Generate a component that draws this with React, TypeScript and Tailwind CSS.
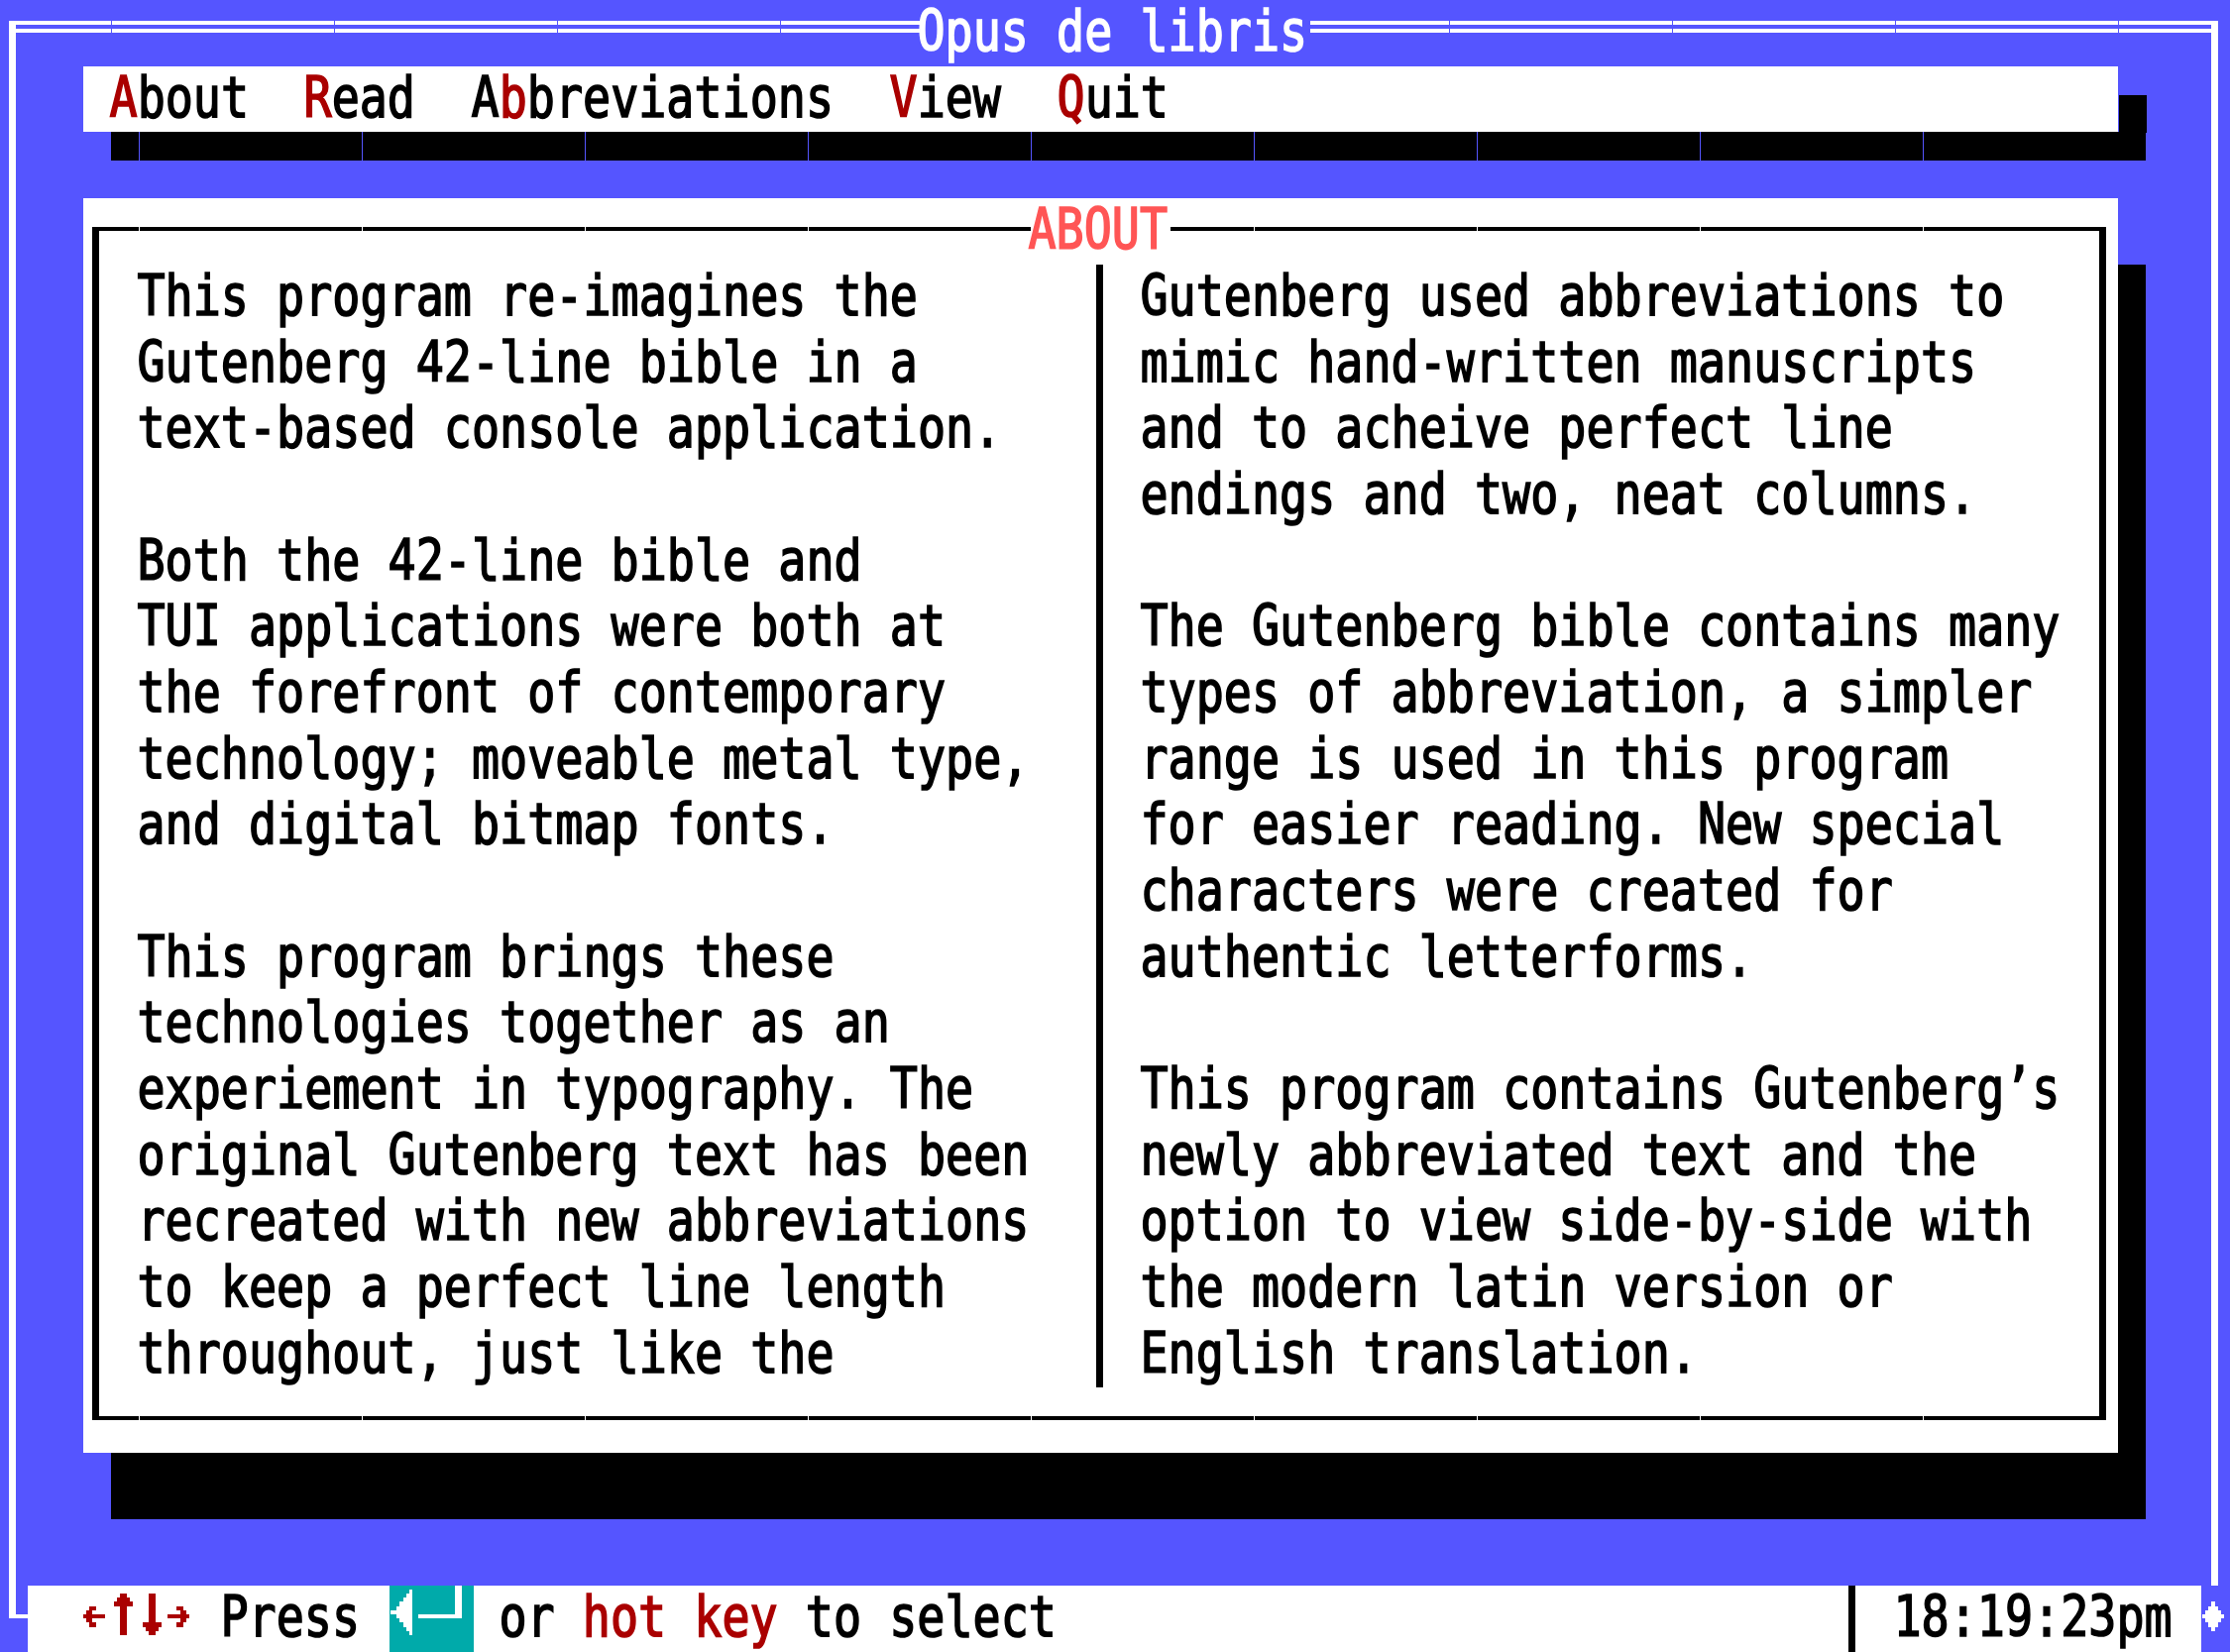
const ABOUT_LEFT = [
  'This program re-imagines the',
  'Gutenberg 42-line bible in a',
  'text-based console application.',
  '',
  'Both the 42-line bible and',
  'TUI applications were both at',
  'the forefront of contemporary',
  'technology; moveable metal type,',
  'and digital bitmap fonts.',
  '',
  'This program brings these',
  'technologies together as an',
  'experiement in typography. The',
  'original Gutenberg text has been',
  'recreated with new abbreviations',
  'to keep a perfect line length',
  'throughout, just like the',
];

const ABOUT_RIGHT = [
  'Gutenberg used abbreviations to',
  'mimic hand-written manuscripts',
  'and to acheive perfect line',
  'endings and two, neat columns.',
  '',
  'The Gutenberg bible contains many',
  'types of abbreviation, a simpler',
  'range is used in this program',
  'for easier reading. New special',
  'characters were created for',
  'authentic letterforms.',
  '',
  'This program contains Gutenberg\u2019s',
  'newly abbreviated text and the',
  'option to view side-by-side with',
  'the modern latin version or',
  'English translation.',
];

const TYPE =
  "block h-[66.68px] origin-left -translate-x-[2.5px] scale-x-[0.811] whitespace-pre font-['DejaVu_Sans_Mono',monospace] text-[57.6px] leading-[64px] [-webkit-text-stroke:1.7px_currentColor]";

function Column({ lines, className }: { lines: string[]; className: string }) {
  return (
    <div className={className}>
      {lines.map((line, i) => (
        <p key={i} className={TYPE}>
          {line}
        </p>
      ))}
    </div>
  );
}

function MenuItem({ pre = '', hot, post, className }: { pre?: string; hot: string; post: string; className: string }) {
  return (
    <button className={`shrink-0 text-left ${className}`}>
      <span className={TYPE}>
        {pre}
        <span className="text-[#aa0000]">{hot}</span>
        {post}
      </span>
    </button>
  );
}

/* Hairline seams between runs of eight character cells. */
function Seams({ count, className, color }: { count: number; className: string; color: string }) {
  return (
    <div className={`flex gap-[224px] ${className}`}>
      {Array.from({ length: count }, (_, i) => (
        <span key={i} className={`h-full w-px shrink-0 ${color}`} />
      ))}
    </div>
  );
}

export default function App() {
  return (
    <div className="relative flex h-[1667px] w-[2250px] flex-col overflow-hidden bg-[#5555ff] text-black">
      <div className="absolute top-[21px] left-[9px] h-[1612px] w-[7px] bg-white" />
      <div className="absolute top-[21px] left-[2231px] h-[1579px] w-[7px] bg-white" />
      <div className="absolute top-[1629px] left-[9px] h-[4px] w-[19px] bg-white" />

      <header className="flex h-[67px] w-full shrink-0 pl-4">
        <div className="mt-[21px] h-3 w-[912px] shrink-0 border-y-4 border-white" />
        <h1 className="w-[394px] shrink-0 text-white">
          <span className={TYPE}>Opus de libris</span>
        </h1>
        <div className="mt-[21px] h-3 w-[909px] shrink-0 border-y-4 border-white" />
      </header>
      <Seams count={4} className="absolute top-[21px] left-[112px] h-3" color="bg-[#5555ff]" />
      <Seams count={4} className="absolute top-[21px] left-[1462px] h-3" color="bg-[#5555ff]" />

      <nav className="relative ml-[84px] flex h-[66px] w-[2053px] shrink-0 bg-white pl-[28.5px]">
        <MenuItem className="w-[196.875px]" hot="A" post="bout" />
        <MenuItem className="w-[168.75px]" hot="R" post="ead" />
        <MenuItem className="w-[421.875px]" pre="A" hot="b" post="breviations" />
        <MenuItem className="w-[168.75px]" hot="V" post="iew" />
        <MenuItem className="w-[140px]" hot="Q" post="uit" />
        <div className="absolute top-[29px] left-[2054px] h-[38px] w-[28px] bg-black" />
      </nav>
      <div className="ml-[112px] h-[29px] w-[2053px] shrink-0 bg-black pl-[28px]">
        <Seams count={9} className="h-full" color="bg-[#5555ff]" />
      </div>

      <main className="relative mt-[38px] ml-[84px] h-[1266px] w-[2053px] shrink-0">
        <div className="absolute top-[67px] left-[28px] h-[1266px] w-[2053px] bg-black" />
        <section className="relative h-full bg-white pt-[29px] pl-[9px]">
          <div className="relative h-[1204px] w-[2032px] border-x-[7px] border-y-4 border-black">
            <Seams count={9} className="absolute -top-1 left-[40px] h-1" color="bg-white" />
            <Seams count={9} className="absolute -bottom-1 left-[40px] h-1" color="bg-white" />
            <h2 className="absolute -top-[33px] left-[940px] h-[66px] w-[141px] bg-white text-[#ff5555]">
              <span className={TYPE}>ABOUT</span>
            </h2>
            <div className="flex h-[1167px] pt-[34px] pl-[40.6px]">
              <Column lines={ABOUT_LEFT} className="w-[965.4px] shrink-0" />
              <div className="w-[7px] shrink-0 bg-black" />
              <Column lines={ABOUT_RIGHT} className="w-[950px] shrink-0 pl-[40px]" />
            </div>
          </div>
        </section>
      </main>

      <footer className="relative mt-[134px] ml-[28px] flex h-[67px] w-[2193px] shrink-0 bg-white pl-[56px]">
        <svg className="mt-2 h-[42px] w-[113px] shrink-0 text-[#aa0000]" viewBox="0 0 113 42" fill="currentColor" shapeRendering="crispEdges">
          <path d="M0 21h3v-4h3v-4h7v4H9v4h13v4H9v4h4v5H6v-5H3v-4H0z" />
          <path d="M37 0h7v4h3v4h3v5h-6v29h-7V13h-6V8h3V4h3z" />
          <path d="M66 0h7v29h6v5h-3v4h-3v4h-7v-4h-3v-4h-3v-5h6z" />
          <path d="M85 21h13v-4h-4v-4h7v4h3v4h3v4h-3v4h-3v5h-7v-5h4v-4H85z" />
        </svg>
        <div className="ml-[28px] w-[168px] shrink-0">
          <span className={TYPE}>Press</span>
        </div>
        <div className="h-full w-[85px] shrink-0 bg-[#00aaaa]">
          <svg className="h-full w-full" viewBox="0 0 85 67" fill="#fff" shapeRendering="crispEdges">
            <path d="M23 4v46h-3v-4h-3v-4h-3v-5h-4v-4H7v-4H1v-4h6v-4h3v-5h4v-4h3V8h3V4z" />
            <path d="M66 0h7v33H29v-4h37z" />
          </svg>
        </div>
        <div className="ml-[28px] flex">
          <span className={TYPE}>
            or <span className="text-[#aa0000]">hot key</span> to select
          </span>
        </div>
        <div className="absolute top-0 left-[1837px] h-full w-[7px] bg-black" />
        <time className="absolute top-0 left-[1884.5px]">
          <span className={TYPE}>18:19:23pm</span>
        </time>
        <svg className="absolute top-[16px] left-[2194px] h-[30px] w-[22px]" viewBox="0 0 22 30" fill="#fff" shapeRendering="crispEdges">
          <path d="M9 0h4v5h3v4h3v4h3v4h-3v4h-3v5h-3v4H9v-4H6v-5H3v-4H0v-4h3V9h3V5h3z" />
        </svg>
      </footer>
    </div>
  );
}
